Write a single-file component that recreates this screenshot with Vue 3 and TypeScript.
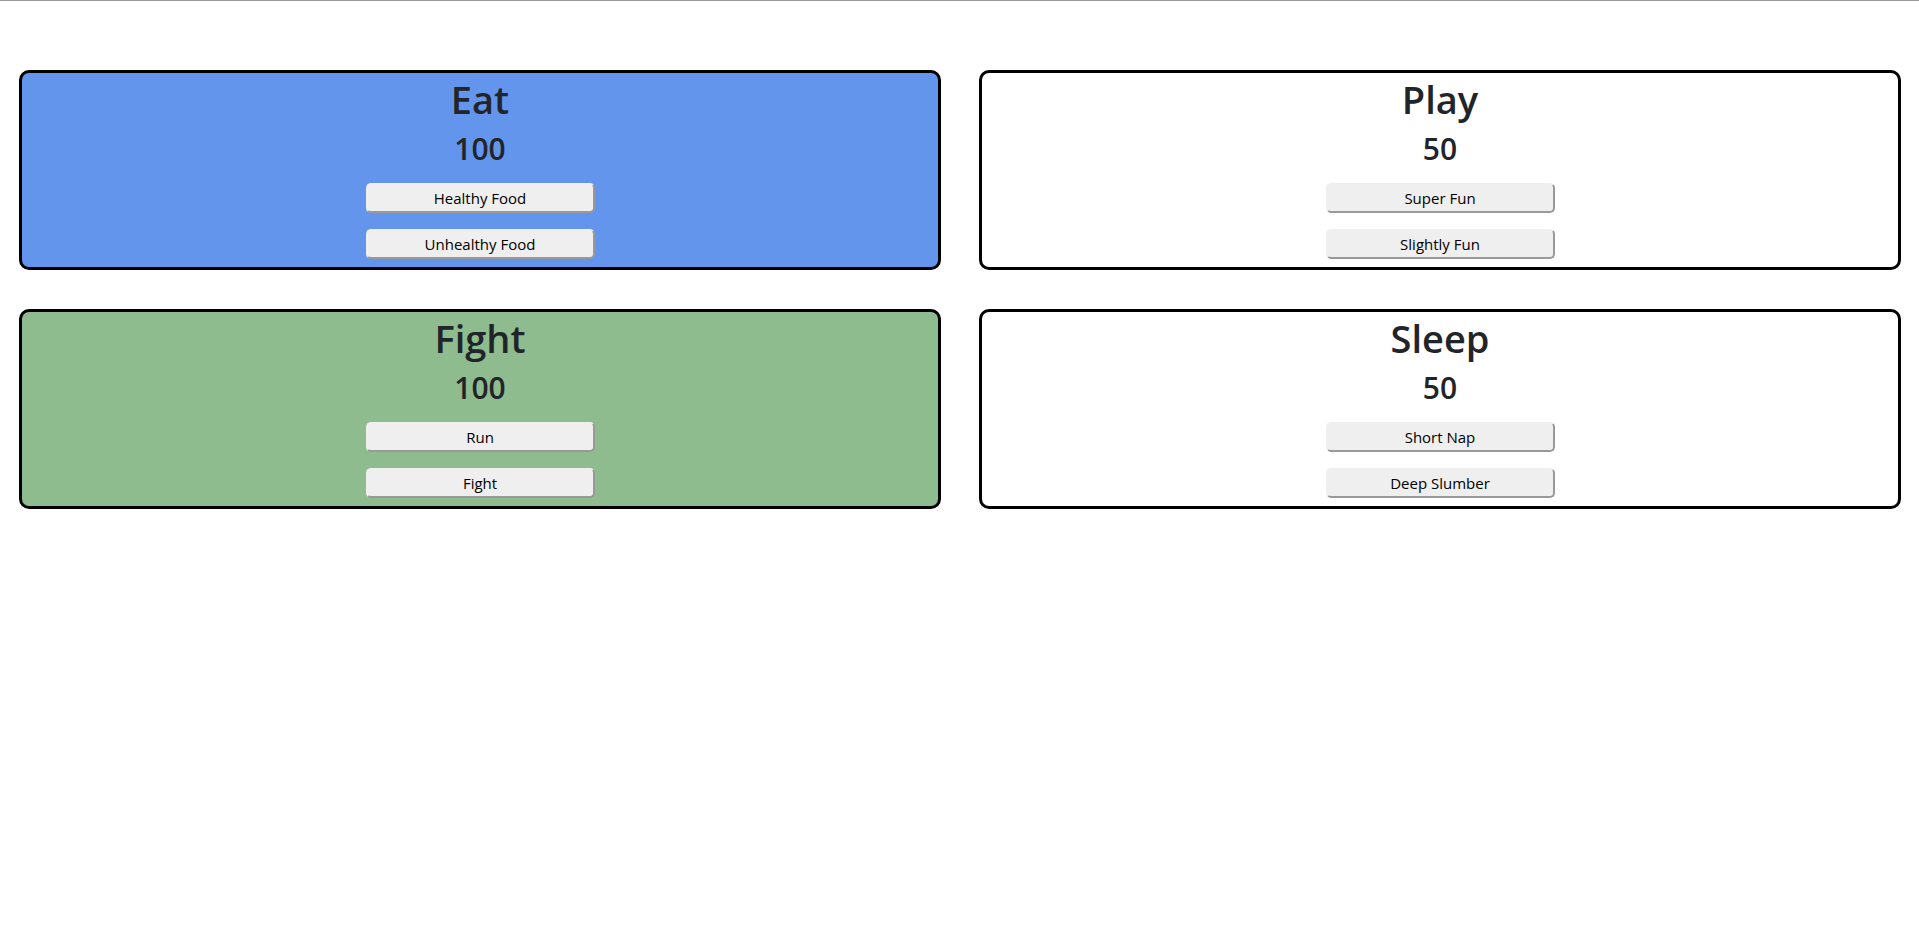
<script setup lang="ts">
import { reactive } from 'vue'

interface Action {
  label: string
  change: number
}

interface Activity {
  name: string
  tone: string
  score: number
  actions: Action[]
}

const activities = reactive<Activity[]>([
  {
    name: 'Eat',
    tone: 'blue',
    score: 100,
    actions: [
      { label: 'Healthy Food', change: 10 },
      { label: 'Unhealthy Food', change: -10 },
    ],
  },
  {
    name: 'Play',
    tone: 'plain',
    score: 50,
    actions: [
      { label: 'Super Fun', change: 10 },
      { label: 'Slightly Fun', change: 5 },
    ],
  },
  {
    name: 'Fight',
    tone: 'green',
    score: 100,
    actions: [
      { label: 'Run', change: 5 },
      { label: 'Fight', change: -10 },
    ],
  },
  {
    name: 'Sleep',
    tone: 'plain',
    score: 50,
    actions: [
      { label: 'Short Nap', change: 5 },
      { label: 'Deep Slumber', change: 10 },
    ],
  },
])

function apply(activity: Activity, action: Action): void {
  activity.score = Math.min(100, Math.max(0, activity.score + action.change))
}
</script>

<template>
  <main class="board">
    <section
      v-for="activity in activities"
      :key="activity.name"
      class="card"
      :class="activity.tone"
    >
      <h1>{{ activity.name }}</h1>
      <h2>{{ activity.score }}</h2>
      <div class="actions">
        <button
          v-for="action in activity.actions"
          :key="action.label"
          type="button"
          @click="apply(activity, action)"
        >
          {{ action.label }}
        </button>
      </div>
    </section>
  </main>
</template>

<style>
body {
  margin: 0;
  background: #fff;
}
</style>

<style scoped>
.board {
  display: grid;
  grid-template-columns: 1fr 1fr;
  gap: 39px 38px;
  padding: 69px 18px 39px 19px;
  border-top: 1px solid #999;
  font-family: 'Segoe UI', 'Open Sans', 'Noto Sans', sans-serif;
  color: #212529;
}

.card {
  box-sizing: border-box;
  padding: 2px 0 8px;
  border: 3px solid #000;
  border-radius: 10px;
  text-align: center;
}

.blue {
  background: #6495ed;
}

.green {
  background: #8fbc8f;
}

h1,
h2 {
  margin: 0 0 8px;
  font-weight: 600;
}

h1 {
  font-size: 38px;
  line-height: 48px;
}

h2 {
  margin-bottom: 16px;
  font-size: 30px;
  line-height: 36px;
}

.actions {
  display: flex;
  flex-direction: column;
  align-items: center;
  gap: 16px;
}

button {
  box-sizing: border-box;
  width: 25%;
  height: 30px;
  padding: 0 6px;
  border: 2px solid;
  border-color: #efefef #999 #999 #efefef;
  border-radius: 5px;
  background: #efefef;
  color: #000;
  font-family: inherit;
  font-size: 15px;
  line-height: 24px;
  cursor: pointer;
}
</style>
